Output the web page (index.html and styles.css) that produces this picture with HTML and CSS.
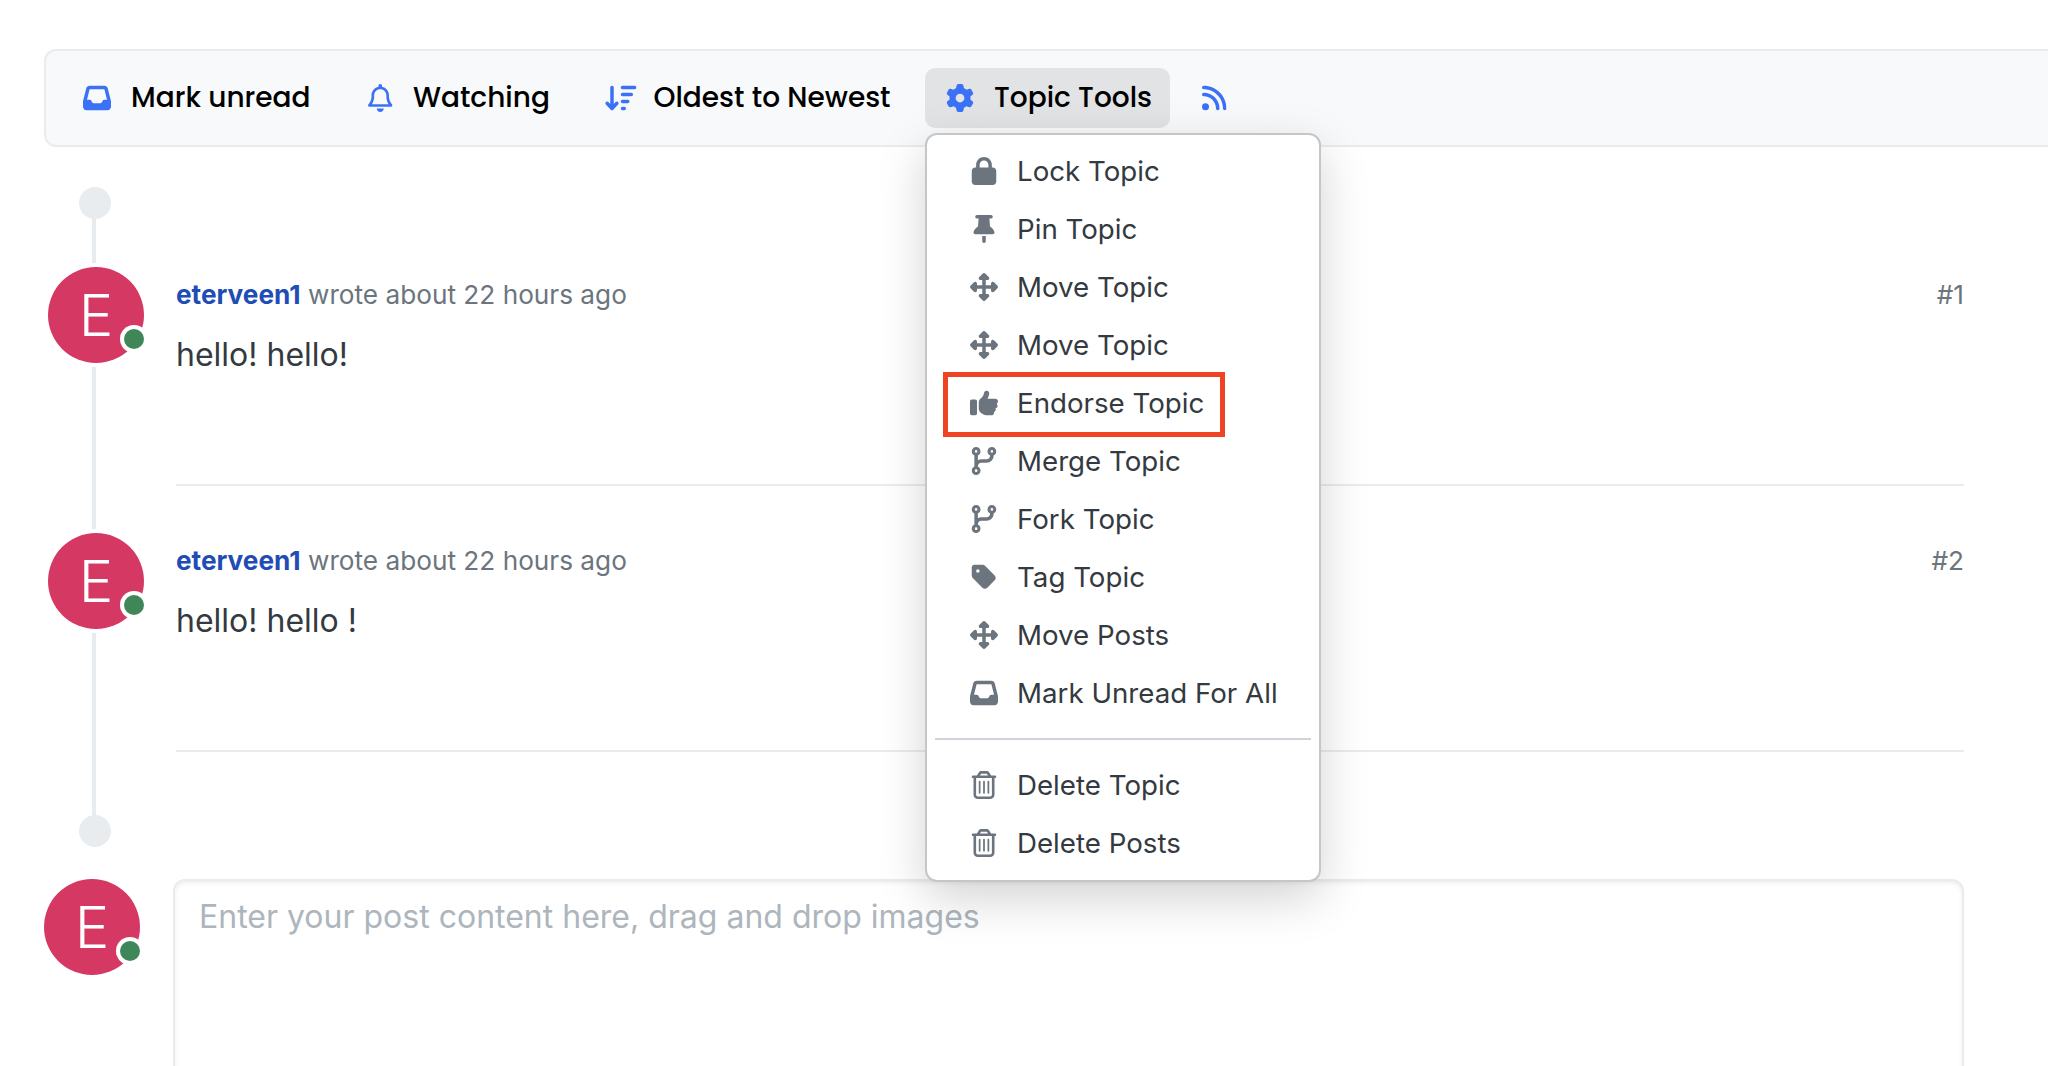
FILE: index.html
```html
<!DOCTYPE html>
<html lang="en">
<head>
<meta charset="utf-8">
<title>Topic</title>
<link rel="stylesheet" href="styles.css">
</head>
<body>
<svg class="defs" aria-hidden="true">
  <symbol id="i-inbox" viewBox="0 0 512 512"><path d="M121 32C91.6 32 66 52 58.9 80.5L1.9 308.4C.6 313.5 0 318.7 0 323.9V416c0 35.3 28.7 64 64 64H448c35.3 0 64-28.7 64-64V323.9c0-5.2-.6-10.4-1.9-15.5l-57-227.9C446 52 420.4 32 391 32H121zm0 64H391l48 192H387.8c-12.1 0-23.2 6.8-28.6 17.7l-14.3 28.6c-5.4 10.8-16.5 17.7-28.6 17.7H195.8c-12.1 0-23.2-6.8-28.6-17.7l-14.3-28.6c-5.4-10.8-16.5-17.7-28.6-17.7H73L121 96z"/></symbol>
  <symbol id="i-bell" viewBox="0 0 448 512"><path d="M224 0c-17.7 0-32 14.3-32 32V51.2C119 66 64 130.6 64 208v25.4c0 45.4-15.5 89.5-43.8 124.9L5.3 377c-5.8 7.2-6.9 17.1-2.9 25.4S14.8 416 24 416H424c9.2 0 17.6-5.3 21.6-13.6s2.9-18.2-2.9-25.4l-14.9-18.6C399.5 322.9 384 278.8 384 233.4V208c0-77.4-55-142-128-156.8V32c0-17.7-14.3-32-32-32zm0 96c61.9 0 112 50.1 112 112v25.4c0 47.9 13.9 94.6 39.7 134.6H72.3C98.1 328 112 281.3 112 233.4V208c0-61.9 50.1-112 112-112zm64 352H224 160c0 17 6.7 33.3 18.7 45.3s28.3 18.7 45.3 18.7s33.3-6.7 45.3-18.7s18.7-28.3 18.7-45.3z"/></symbol>
  <symbol id="i-sort" viewBox="0 0 576 512"><path d="M151.6 469.6C145.5 476.2 137 480 128 480s-17.5-3.8-23.6-10.4l-88-96c-11.9-13-11.1-33.3 2-45.2s33.3-11.1 45.2 2L96 365.7V64c0-17.7 14.3-32 32-32s32 14.3 32 32V365.7l32.4-35.4c11.9-13 32.2-13.9 45.2-2s13.9 32.2 2 45.2l-88 96zM320 480c-17.7 0-32-14.3-32-32s14.3-32 32-32h32c17.7 0 32 14.3 32 32s-14.3 32-32 32H320zm0-128c-17.7 0-32-14.3-32-32s14.3-32 32-32h96c17.7 0 32 14.3 32 32s-14.3 32-32 32H320zm0-128c-17.7 0-32-14.3-32-32s14.3-32 32-32H480c17.7 0 32 14.3 32 32s-14.3 32-32 32H320zm0-128c-17.7 0-32-14.3-32-32s14.3-32 32-32H544c17.7 0 32 14.3 32 32s-14.3 32-32 32H320z"/></symbol>
  <symbol id="i-gear" viewBox="0 0 512 512"><path d="M495.9 166.6c3.2 8.7 .5 18.4-6.4 24.6l-43.3 39.4c1.1 8.3 1.7 16.8 1.7 25.4s-.6 17.1-1.7 25.4l43.3 39.4c6.9 6.2 9.6 15.9 6.4 24.6c-4.4 11.9-9.7 23.3-15.8 34.3l-4.7 8.1c-6.6 11-14 21.4-22.1 31.2c-5.9 7.2-15.7 9.6-24.5 6.8l-55.7-17.7c-13.4 10.3-28.2 18.9-44 25.4l-12.5 57.1c-2 9.1-9 16.3-18.2 17.8c-13.8 2.3-28 3.5-42.5 3.5s-28.7-1.2-42.5-3.5c-9.2-1.5-16.2-8.7-18.2-17.8l-12.5-57.1c-15.8-6.5-30.6-15.1-44-25.4L83.1 425.9c-8.8 2.8-18.6 .3-24.5-6.8c-8.1-9.8-15.5-20.2-22.1-31.2l-4.7-8.1c-6.1-11-11.4-22.4-15.8-34.3c-3.2-8.7-.5-18.4 6.4-24.6l43.3-39.4C64.6 273.1 64 264.6 64 256s.6-17.1 1.7-25.4L22.4 191.2c-6.9-6.2-9.6-15.9-6.4-24.6c4.4-11.9 9.7-23.3 15.8-34.3l4.7-8.1c6.6-11 14-21.4 22.1-31.2c5.9-7.2 15.7-9.6 24.5-6.8l55.7 17.7c13.4-10.3 28.2-18.9 44-25.4l12.5-57.1c2-9.1 9-16.3 18.2-17.8C227.3 1.2 241.5 0 256 0s28.7 1.2 42.5 3.5c9.2 1.5 16.2 8.7 18.2 17.8l12.5 57.1c15.8 6.5 30.6 15.1 44 25.4l55.7-17.7c8.8-2.8 18.6-.3 24.5 6.8c8.1 9.8 15.5 20.2 22.1 31.2l4.7 8.1c6.1 11 11.4 22.4 15.8 34.3zM256 336a80 80 0 1 0 0-160 80 80 0 1 0 0 160z"/></symbol>
  <symbol id="i-rss" viewBox="0 0 448 512"><path d="M0 64C0 46.3 14.3 32 32 32c229.8 0 416 186.2 416 416c0 17.7-14.3 32-32 32s-32-14.3-32-32C384 253.6 226.4 96 32 96C14.3 96 0 81.7 0 64zM0 416a64 64 0 1 1 128 0A64 64 0 1 1 0 416zM32 160c159.1 0 288 128.9 288 288c0 17.7-14.3 32-32 32s-32-14.3-32-32c0-123.7-100.3-224-224-224c-17.7 0-32-14.3-32-32s14.3-32 32-32z"/></symbol>
  <symbol id="i-lock" viewBox="0 0 448 512"><path d="M144 144v48H304V144c0-44.2-35.8-80-80-80s-80 35.8-80 80zM80 192V144C80 64.5 144.5 0 224 0s144 64.5 144 144v48h16c35.3 0 64 28.7 64 64V448c0 35.3-28.7 64-64 64H64c-35.3 0-64-28.7-64-64V256c0-35.3 28.7-64 64-64H80z"/></symbol>
  <symbol id="i-pin" viewBox="0 0 384 512"><path d="M32 32C32 14.3 46.3 0 64 0H320c17.7 0 32 14.3 32 32s-14.3 32-32 32H290.5l11.4 148.2c36.7 19.9 65.7 53.2 79.5 94.7l1 3c3.3 9.8 1.6 20.5-4.4 28.8s-15.7 13.3-26 13.3H32c-10.3 0-19.9-4.9-26-13.3s-7.7-19.1-4.4-28.8l1-3c13.8-41.5 42.8-74.8 79.5-94.7L93.5 64H64C46.3 64 32 49.7 32 32zM160 384h64v96c0 17.7-14.3 32-32 32s-32-14.3-32-32V384z"/></symbol>
  <symbol id="i-move" viewBox="0 0 512 512"><path d="M278.6 9.4c-12.5-12.5-32.8-12.5-45.3 0l-64 64c-9.2 9.2-11.9 22.9-6.9 34.9s16.6 19.8 29.6 19.8h32v96H128V192c0-12.9-7.8-24.6-19.8-29.6s-25.7-2.2-34.9 6.9l-64 64c-12.5 12.5-12.5 32.8 0 45.3l64 64c9.2 9.2 22.9 11.9 34.9 6.9s19.8-16.6 19.8-29.6V288h96v96H192c-12.9 0-24.6 7.8-29.6 19.8s-2.2 25.7 6.9 34.9l64 64c12.5 12.5 32.8 12.5 45.3 0l64-64c9.2-9.2 11.9-22.9 6.9-34.9s-16.6-19.8-29.6-19.8H288V288h96v32c0 12.9 7.8 24.6 19.8 29.6s25.7 2.2 34.9-6.9l64-64c12.5-12.5 12.5-32.8 0-45.3l-64-64c-9.2-9.2-22.9-11.9-34.9-6.9s-19.8 16.6-19.8 29.6v32H288V128h32c12.9 0 24.6-7.8 29.6-19.8s2.2-25.7-6.9-34.9l-64-64z"/></symbol>
  <symbol id="i-thumb" viewBox="0 0 512 512"><path d="M313.4 32.9c26 5.2 42.9 30.5 37.7 56.5l-2.3 11.4c-5.3 26.7-15.1 52.1-28.8 75.2H464c26.5 0 48 21.5 48 48c0 18.5-10.5 34.6-25.9 42.6C497 275.4 504 288.9 504 304c0 23.4-16.8 42.9-38.9 47.1c4.4 7.3 6.9 15.8 6.9 24.9c0 21.3-13.9 39.4-33.1 45.6c.7 3.3 1.1 6.8 1.1 10.4c0 26.5-21.5 48-48 48H294.5c-19 0-37.5-5.6-53.3-16.1l-38.5-25.7C176 420.4 160 390.4 160 358.3V320 272 247.1c0-29.2 13.3-56.7 36-75l7.4-5.9c26.5-21.2 44.6-51 51.2-84.2l2.3-11.4c5.2-26 30.5-42.9 56.5-37.7zM32 192H96c17.7 0 32 14.3 32 32V448c0 17.7-14.3 32-32 32H32c-17.7 0-32-14.3-32-32V224c0-17.7 14.3-32 32-32z"/></symbol>
  <symbol id="i-branch" viewBox="0 0 448 512"><path d="M80 104a24 24 0 1 0 0-48 24 24 0 1 0 0 48zm80-24c0 32.8-19.7 61-48 73.3v87.8c18.8-10.9 40.7-17.1 64-17.1h96c35.3 0 64-28.7 64-64v-6.7C307.7 141 288 112.8 288 80c0-44.2 35.8-80 80-80s80 35.8 80 80c0 32.8-19.7 61-48 73.3V160c0 70.7-57.3 128-128 128H176c-35.3 0-64 28.7-64 64v6.7c28.3 12.3 48 40.5 48 73.3c0 44.2-35.8 80-80 80s-80-35.8-80-80c0-32.8 19.7-61 48-73.3V352 153.3C19.7 141 0 112.8 0 80C0 35.8 35.8 0 80 0s80 35.8 80 80zm232 0a24 24 0 1 0 -48 0 24 24 0 1 0 48 0zM80 456a24 24 0 1 0 0-48 24 24 0 1 0 0 48z"/></symbol>
  <symbol id="i-tag" viewBox="0 0 448 512"><path d="M0 80V229.5c0 17 6.7 33.3 18.7 45.3l176 176c25 25 65.5 25 90.5 0L418.7 317.3c25-25 25-65.5 0-90.5l-176-176c-12-12-28.3-18.7-45.3-18.7H48C21.5 32 0 53.5 0 80zm112 32a32 32 0 1 1 0 64 32 32 0 1 1 0-64z"/></symbol>
  <symbol id="i-trash" viewBox="0 0 448 512"><path d="M170.5 51.6L151.5 80h145l-19-28.4c-1.5-2.2-4-3.6-6.7-3.6H177.1c-2.7 0-5.2 1.3-6.7 3.6zm147-26.6L354.2 80H368h48 8c13.3 0 24 10.7 24 24s-10.7 24-24 24h-8V432c0 44.2-35.8 80-80 80H112c-44.2 0-80-35.8-80-80V128H24c-13.3 0-24-10.7-24-24S10.7 80 24 80h8H80 93.8l36.7-55.1C140.9 9.4 158.4 0 177.1 0h93.7c18.7 0 36.2 9.4 46.6 24.9zM80 128V432c0 17.7 14.3 32 32 32H336c17.7 0 32-14.3 32-32V128H80zm80 64V400c0 8.8-7.2 16-16 16s-16-7.2-16-16V192c0-8.8 7.2-16 16-16s16 7.2 16 16zm80 0V400c0 8.8-7.2 16-16 16s-16-7.2-16-16V192c0-8.8 7.2-16 16-16s16 7.2 16 16zm80 0V400c0 8.8-7.2 16-16 16s-16-7.2-16-16V192c0-8.8 7.2-16 16-16s16 7.2 16 16z"/></symbol>
</svg>

<div class="page">
  <nav class="toolbar">
    <a class="tool tool-unread"><svg class="ico w28"><use href="#i-inbox"/></svg><span>Mark unread</span></a>
    <a class="tool tool-watch"><svg class="ico w24"><use href="#i-bell"/></svg><span>Watching</span></a>
    <a class="tool tool-sort"><svg class="ico w32"><use href="#i-sort"/></svg><span>Oldest to Newest</span></a>
    <div class="tools-wrap">
      <a class="tool tool-open"><svg class="ico w28"><use href="#i-gear"/></svg><span>Topic Tools</span></a>
      <ul class="menu">
        <li class="item"><svg class="mico"><use href="#i-lock"/></svg>Lock Topic</li>
        <li class="item"><svg class="mico"><use href="#i-pin"/></svg>Pin Topic</li>
        <li class="item"><svg class="mico"><use href="#i-move"/></svg>Move Topic</li>
        <li class="item"><svg class="mico"><use href="#i-move"/></svg>Move Topic</li>
        <li class="item item-marked"><svg class="mico"><use href="#i-thumb"/></svg>Endorse Topic</li>
        <li class="item"><svg class="mico"><use href="#i-branch"/></svg>Merge Topic</li>
        <li class="item"><svg class="mico"><use href="#i-branch"/></svg>Fork Topic</li>
        <li class="item"><svg class="mico"><use href="#i-tag"/></svg>Tag Topic</li>
        <li class="item"><svg class="mico"><use href="#i-move"/></svg>Move Posts</li>
        <li class="item"><svg class="mico"><use href="#i-inbox"/></svg>Mark Unread For All</li>
        <li class="sep"></li>
        <li class="item"><svg class="mico"><use href="#i-trash"/></svg>Delete Topic</li>
        <li class="item"><svg class="mico"><use href="#i-trash"/></svg>Delete Posts</li>
      </ul>
    </div>
    <a class="tool tool-rss"><svg class="ico w24"><use href="#i-rss"/></svg></a>
  </nav>

  <section class="thread">
    <div class="rail"></div>
    <div class="dot dot-top"></div>

    <article class="post">
      <div class="avatar">E<i class="status"></i></div>
      <div class="post-body">
        <div class="meta"><div><a class="author">eterveen1</a> wrote about 22 hours ago</div><div>#1</div></div>
        <p class="content">hello! hello!</p>
      </div>
    </article>

    <article class="post">
      <div class="avatar">E<i class="status"></i></div>
      <div class="post-body">
        <div class="meta"><div><a class="author">eterveen1</a> wrote about 22 hours ago</div><div>#2</div></div>
        <p class="content">hello! hello !</p>
      </div>
    </article>

    <div class="dot dot-bottom"></div>
  </section>

  <section class="composer">
    <div class="avatar avatar-composer">E<i class="status"></i></div>
    <div class="editor">Enter your post content here, drag and drop images</div>
  </section>
</div>
</body>
</html>
```

FILE: styles.css
```css
*, *::before, *::after { box-sizing: border-box; }
html, body { margin: 0; padding: 0; background: #fff; overflow: hidden; }
.defs { display: none; }
.page {
  width: 2048px;
  height: 1066px;
  overflow: hidden;
  padding: 49px 84px 0 44px;
  font-family: "Inter", "Liberation Sans", sans-serif;
  color: #343a40;
}

/* toolbar */
.toolbar {
  display: flex;
  align-items: center;
  height: 98px;
  margin-right: -200px;
  padding-left: 37px;
  background: #f8f9fa;
  border: 2px solid #e9ecef;
  border-radius: 12px 0 0 12px;
  font-family: "Poppins", "Inter", sans-serif;
  font-size: 28px;
  font-weight: 500;
  color: #000;
}
.tool { display: flex; align-items: center; height: 60px; }
.ico { height: 28px; fill: #3b71f6; flex: none; }
.w24 { width: 24.5px; }
.w28 { width: 28px; }
.w32 { width: 31.5px; }
.tool-unread { gap: 20px; width: 285px; }
.tool-watch { gap: 20.5px; width: 237px; }
.tool-sort { gap: 17px; width: 320px; }
.tool-open {
  gap: 20px;
  width: 245px;
  padding-left: 21px;
  background: #e2e3e5;
  border-radius: 10px;
}
.tool-rss { margin-left: 32px; }
.tools-wrap { position: relative; }

/* dropdown */
.menu {
  position: absolute;
  top: 65px;
  left: 0;
  z-index: 5;
  width: 396px;
  margin: 0;
  padding: 7px 0 8px;
  list-style: none;
  background: #fff;
  border: 2px solid #c5c6c8;
  border-radius: 12px;
  box-shadow: 0 16px 48px rgba(0, 0, 0, .175);
  font-family: "Inter", sans-serif;
  font-size: 27.7px;
  font-weight: 400;
  color: #343a40;
}
.item {
  position: relative;
  display: flex;
  align-items: center;
  gap: 19px;
  height: 58px;
  padding-left: 43px;
  white-space: nowrap;
}
.mico { width: 28px; height: 28px; fill: #6c757d; flex: none; }
.sep { height: 2px; margin: 16px 8px; background: #ced4da; }
.item-marked::after {
  content: "";
  position: absolute;
  left: 16px;
  top: -2px;
  width: 282px;
  height: 65px;
  border: 5px solid #ee4423;
}

/* thread */
.thread { position: relative; padding-top: 40px; }
.rail {
  position: absolute;
  left: 48px;
  top: 60px;
  width: 4px;
  height: 620px;
  background: #e9ecef;
}
.dot {
  position: relative;
  width: 32px;
  height: 32px;
  margin-left: 35px;
  border-radius: 50%;
  background: #e9ecef;
}
.dot-top { margin-bottom: 48px; }
.dot-bottom { margin-top: 63px; }
.post {
  position: relative;
  display: flex;
  height: 219px;
}
.post + .post { margin-top: 47px; }
.avatar {
  position: relative;
  flex: none;
  width: 96px;
  height: 96px;
  margin-left: 4px;
  border-radius: 50%;
  background: #d63864;
  box-shadow: 0 0 0 4px #fff;
  color: #fff;
  font-size: 58px;
  line-height: 96px;
  text-align: center;
  font-weight: 300;
}
.status {
  position: absolute;
  right: 0;
  bottom: 14px;
  width: 20px;
  height: 20px;
  border-radius: 50%;
  background: #3f8758;
  box-shadow: 0 0 0 4px #fff;
}
.post-body {
  flex: 1;
  margin-left: 32px;
  border-bottom: 2px solid #e9ecef;
}
.meta {
  display: flex;
  justify-content: space-between;
  margin-top: 12px;
  font-size: 26.2px;
  line-height: 32px;
  color: #6c757d;
}
.author { color: #1f4db5; font-weight: 700; }
.content {
  margin: 26px 0 0;
  font-size: 32px;
  line-height: 36px;
  color: #343a40;
}

/* composer */
.composer { display: flex; margin-top: 32px; }
.avatar-composer { margin-left: 0; box-shadow: none; }
.editor {
  flex: 1;
  height: 300px;
  margin-left: 33px;
  padding: 16px 24px;
  border: 2px solid #e9ecef;
  border-radius: 12px;
  box-shadow: inset 0 2px 4px rgba(0, 0, 0, .075);
  font-size: 32px;
  line-height: 40px;
  color: #adb5bd;
}
```
